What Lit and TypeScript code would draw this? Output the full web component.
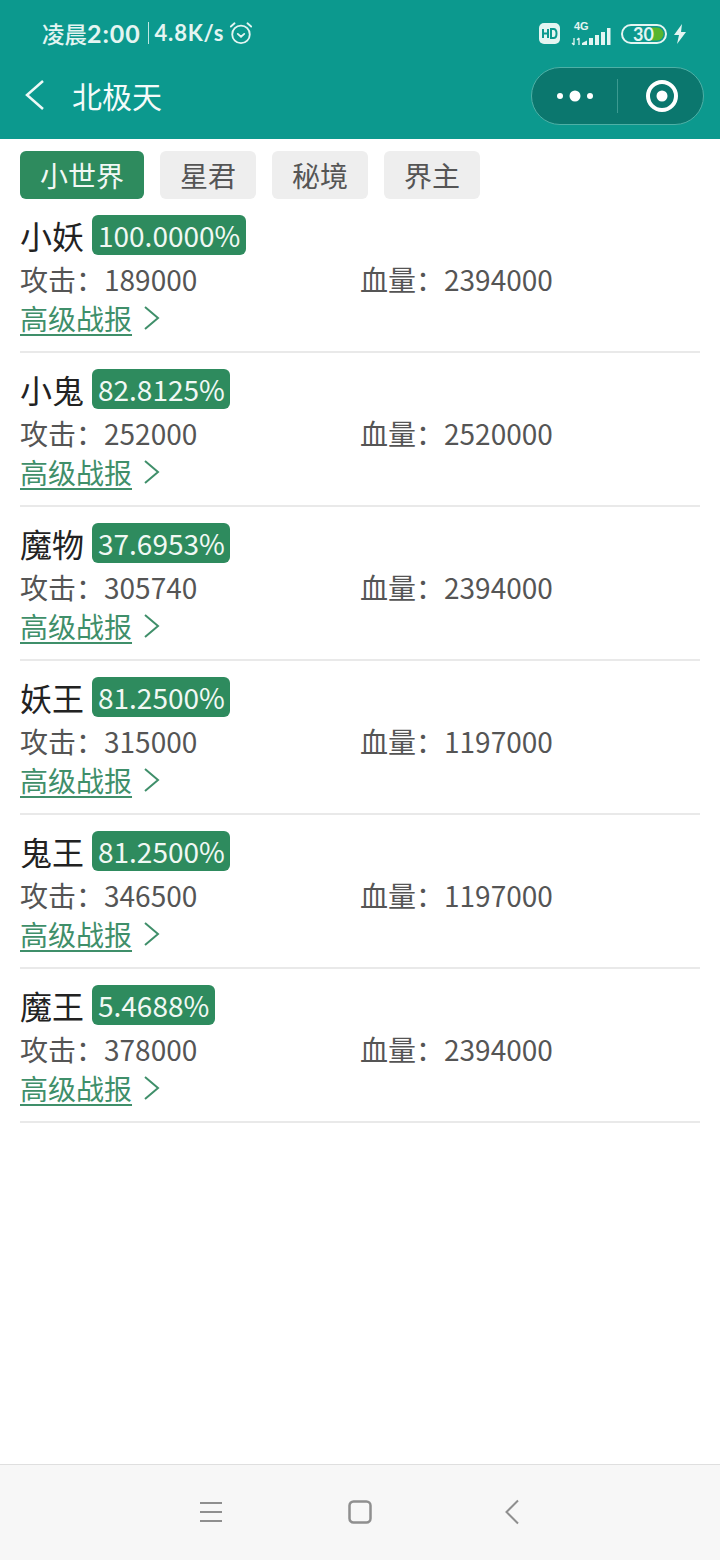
import { LitElement, html, css, svg } from "lit";
import { customElement } from "lit/decorators.js";

const rows = [
  ["小妖", "100.0000%", "189000", "2394000"],
  ["小鬼", "82.8125%", "252000", "2520000"],
  ["魔物", "37.6953%", "305740", "2394000"],
  ["妖王", "81.2500%", "315000", "1197000"],
  ["鬼王", "81.2500%", "346500", "1197000"],
  ["魔王", "5.4688%", "378000", "2394000"],
];

@customElement("app-root")
export class AppRoot extends LitElement {
  static styles = css`
    :host { display: flex; flex-direction: column; width: 720px; height: 1560px; background: #fff; font-family: "Noto Sans CJK SC", "Noto Sans", sans-serif; overflow: hidden; }
    .head { background: #0c998e; height: 139px; flex: none; color: #fff; display: flex; flex-direction: column; }
    .status { height: 67px; display: flex; align-items: center; padding: 0 33px 0 42px; color: #e4f5f2; }
    .time-cn { font-size: 22.5px; line-height: 28px; font-weight: 500; margin-bottom: 1px; }
    .time { font-size: 25px; font-family: Lato, sans-serif; font-weight: 700; letter-spacing: 0.9px; line-height: 28px; margin-bottom: 2px; }
    .sep { width: 1px; height: 22px; background: #bfe6e2; margin: 0 7px 2px; }
    .speed { font-size: 22px; font-family: Lato, sans-serif; font-weight: 700; letter-spacing: 0.8px; line-height: 28px; margin-bottom: 2px; margin-left: -1px; }
    .alarm { margin: 0 0 2px 5px; }
    .grow { flex: 1; }
    .hd { margin-right: 11px; }
    .sig { margin-right: 10px; }
    .bat { margin-right: 6px; }
    .nav { height: 60px; display: flex; align-items: center; padding: 0 16px 0 24px; }
    .back { margin-top: -4px; }
    .title { font-size: 30px; line-height: 60px; margin-left: 26px; color: #f4fbfa; margin-top: -4px; }
    .capsule { box-sizing: border-box; width: 173px; height: 58px; margin-top: -3px; border-radius: 29px; border: 1px solid #4eb0a6; background: #0b776e; display: flex; align-items: center; }
    .cap-side { flex: 1; display: flex; justify-content: center; align-items: center; }
    .cap-rec { margin-left: 3px; }
    .cap-div { width: 1px; height: 34px; background: #3c9a91; }
    .tabs { display: flex; gap: 16px; padding: 12px 20px 0; height: 48px; flex: none; }
    .tab { width: 96px; height: 48px; border-radius: 6px; background: #eeeeee; color: #555; font-size: 28px; line-height: 48px; text-align: center; }
    .tab.on { width: 124px; background: #2e8b5e; color: #f1f8f4; }
    .list { padding: 16px 20px 0; flex: 1; }
    .row { height: 136px; border-bottom: 2px solid #e9e9e9; margin-bottom: 16px; }
    .line1 { display: flex; align-items: center; height: 40px; }
    .name { font-size: 32px; line-height: 44px; color: #222; width: 72px; }
    .pct { background: #2e8b5e; color: #f1f8f4; height: 40px; border-radius: 6px; padding: 0 5.5px 0 6px; font-size: 28px; line-height: 40px; }
    .stats { display: flex; height: 46px; align-items: flex-start; font-size: 28px; color: #555; }
    .stat { width: 340px; line-height: 48px; }
    .link { display: flex; align-items: center; height: 34px; font-size: 28px; }
    .link a { color: #3f8f6a; text-decoration: underline; text-decoration-thickness: 2px; text-underline-offset: 4px; line-height: 34px; }
    .link svg { margin-left: 11px; }
    .bottom { height: 96px; box-sizing: border-box; flex: none; background: #f7f7f7; border-top: 1px solid #dfdfdf; display: flex; align-items: center; justify-content: center; padding: 0 1px 2px 0; }
    .b-menu { margin-right: 126px; }
    .b-home { margin-right: 133px; }
  `;

  render() {
    return html`
      <div class="head">
        <div class="status">
          <span class="time-cn">凌晨</span><span class="time">2:00</span><span class="sep"></span><span class="speed">4.8K/s</span>
          <svg class="alarm" width="24" height="24" viewBox="0 0 26 26" fill="none" stroke="#e4f5f2" stroke-width="2"><circle cx="13" cy="14.5" r="9.5"/><path d="M9.5 14l3.5 3 3.5-3M2 6l4-3.5M24 6l-4-3.5" stroke-linecap="round"/></svg>
          <span class="grow"></span>
          <svg class="hd" width="21" height="21" viewBox="0 0 21 21"><rect width="21" height="21" rx="5" fill="#e4f5f2"/><path d="M4 6v9M9 6v9M4 10.5h5M12 6v9h2.500q3 0 3-4.500t-3-4.500z" fill="none" stroke="#0c998e" stroke-width="2"/></svg>
          <svg class="sig" width="40" height="26" viewBox="0 0 40 26" fill="#e4f5f2">
            <text x="3" y="9" font-size="11" font-weight="700" font-family="Liberation Sans">4G</text>
            <path d="M3 17v7M1 22l2 2M8 24v-7M6 19l2-2" stroke="#e4f5f2" stroke-width="1.300" fill="none"/>
            <path d="M11 24v-2l5-2.500v4.500zM18 24v-7h4v7zM24 24v-10h4v10zM30 24v-13h4v13z M36 24v-17h3.500v17z"/>
          </svg>
          <svg class="bat" width="46" height="22" viewBox="0 0 46 22" fill="none"><rect x="1" y="2" width="44" height="18" rx="9" stroke="#e4f5f2" stroke-width="2"/><path d="M31 4.500h5a6.500 6.500 0 0 1 0 13h-5z" fill="#58b52e"/><text x="12" y="17.500" font-size="18" font-weight="700" fill="#e4f5f2" stroke="none" font-family="Lato">30</text></svg>
          <svg width="14" height="20" viewBox="0 0 14 20" fill="#e4f5f2"><path d="M9 0L1 11h5l-2 9 9-12H8z"/></svg>
        </div>
        <div class="nav">
          <svg class="back" width="22" height="32" viewBox="0 0 22 32" fill="none" stroke="#eef9f7" stroke-width="2.500"><path d="M19 2L3 16l16 14"/></svg>
          <span class="title">北极天</span>
          <span class="grow"></span>
          <div class="capsule">
            <div class="cap-side"><svg width="36" height="14" viewBox="0 0 36 14" fill="#fff"><circle cx="3" cy="7" r="3"/><circle cx="18" cy="7" r="5.500"/><circle cx="33" cy="7" r="3"/></svg></div>
            <div class="cap-div"></div>
            <div class="cap-side"><svg class="cap-rec" width="34" height="34" viewBox="0 0 34 34" fill="none"><circle cx="17" cy="17" r="14" stroke="#fff" stroke-width="4"/><circle cx="17" cy="17" r="5.500" fill="#fff"/></svg></div>
          </div>
        </div>
      </div>
      <div class="tabs">
        <div class="tab on">小世界</div><div class="tab">星君</div><div class="tab">秘境</div><div class="tab">界主</div>
      </div>
      <div class="list">
        ${rows.map(
          (r) => html`<div class="row">
            <div class="line1"><span class="name">${r[0]}</span><span class="pct">${r[1]}</span></div>
            <div class="stats"><span class="stat">攻击：${r[2]}</span><span class="stat">血量：${r[3]}</span></div>
            <div class="link"><a>高级战报</a>${svg`<svg width="18" height="26" viewBox="0 0 18 26" fill="none" stroke="#3f8f6a" stroke-width="2"><path d="M2 2l13 11L2 24"/></svg>`}</div>
          </div>`
        )}
      </div>
      <div class="bottom">
        <svg class="b-menu" width="22" height="22" viewBox="0 0 22 22" fill="none" stroke="#8f8f8f" stroke-width="2"><path d="M0 2h22M0 11h22M0 20h22"/></svg>
        <svg class="b-home" width="24" height="24" viewBox="0 0 24 24" fill="none" stroke="#8f8f8f" stroke-width="2.500"><rect x="1.500" y="1.500" width="21" height="21" rx="4"/></svg>
        <svg width="14" height="26" viewBox="0 0 14 26" fill="none" stroke="#8f8f8f" stroke-width="2"><path d="M13 1.500L1.500 13 13 24.500"/></svg>
      </div>
    `;
  }
}
